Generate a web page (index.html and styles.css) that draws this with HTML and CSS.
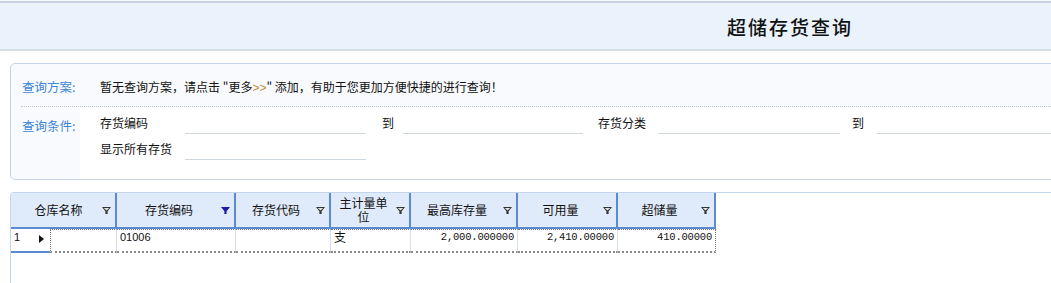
FILE: index.html
```html
<!DOCTYPE html>
<html lang="zh-CN">
<head>
    <meta charset="UTF-8">
    <title>超储存货查询</title>
    <link rel="stylesheet" href="styles.css">
</head>
<body>
    <svg width="0" height="0" class="defs">
        <symbol id="flt" viewBox="0 0 9 7">
            <path d="M0 0h9L5.6 4.2V7H3.4V4.2z" fill="#333"/>
            <path d="M1.8 1h5.4L4.5 3.6z" fill="#e4e4e4"/>
        </symbol>
        <symbol id="flt-on" viewBox="0 0 9 7">
            <path d="M0 0h9L5.6 4.2V7H3.4V4.2z" fill="#1c1ca8"/>
        </symbol>
    </svg>

    <div class="topline"></div>
    <div class="header">
        <h1 class="title">超储存货查询</h1>
    </div>

    <div class="query">
        <div class="q-row plan">
            <div class="q-label">查询方案:</div>
            <div class="q-msg">暂无查询方案，请点击 "更多<span class="more">&gt;&gt;</span>" 添加，有助于您更加方便快捷的进行查询！</div>
        </div>
        <div class="q-row cond">
            <div class="q-label">查询条件:</div>
            <div class="fields">
                <span class="f-label">存货编码</span>
                <span class="f-input"></span>
                <span class="f-to">到</span>
                <span class="f-input"></span>
                <span class="f-label f-cls">存货分类</span>
                <span class="f-input"></span>
                <span class="f-to f-to2">到</span>
                <span class="f-input"></span>

                <span class="f-label">显示所有存货</span>
                <span class="f-input"></span>
            </div>
        </div>
    </div>

    <div class="grid-wrap">
        <div class="grid">
            <div class="th span2"><span class="th-text">仓库名称</span><svg class="flt"><use href="#flt"/></svg></div>
            <div class="th"><span class="th-text">存货编码</span><svg class="flt"><use href="#flt-on"/></svg></div>
            <div class="th"><span class="th-text">存货代码</span><svg class="flt"><use href="#flt"/></svg></div>
            <div class="th"><span class="th-text two"><span class="ln">主计量单</span><span class="ln">位</span></span><svg class="flt"><use href="#flt"/></svg></div>
            <div class="th"><span class="th-text">最高库存量</span><svg class="flt"><use href="#flt"/></svg></div>
            <div class="th"><span class="th-text">可用量</span><svg class="flt"><use href="#flt"/></svg></div>
            <div class="th"><span class="th-text">超储量</span><svg class="flt"><use href="#flt"/></svg></div>

            <div class="rh"><span>1</span><span class="arrow"></span></div>
            <div class="td first"></div>
            <div class="td">01006</div>
            <div class="td"></div>
            <div class="td cjk">支</div>
            <div class="td num">2,000.000000</div>
            <div class="td num">2,410.00000</div>
            <div class="td num last">410.00000</div>
        </div>
    </div>
</body>
</html>
```

FILE: styles.css
```css
html, body {
    margin: 0;
    padding: 0;
}
body {
    width: 1051px;
    height: 283px;
    overflow: hidden;
    background: #fff;
    font-family: "Noto Sans CJK SC", "Liberation Sans", sans-serif;
    font-size: 12px;
    color: #111;
}
.defs {
    position: absolute;
}

.topline {
    height: 1px;
    background: #f3f5f8;
}
.header {
    height: 46px;
    background: #eaf2fc;
    border-top: 2px solid #c6d3e3;
    border-bottom: 2px solid #d5dce4;
    display: flex;
    align-items: center;
}
.title {
    margin: 0 0 0 727px;
    font-size: 19px;
    font-weight: 500;
    letter-spacing: 2px;
    color: #111;
}

.query {
    margin: 12px 0 0 10px;
    width: 1100px;
    height: 115px;
    border: 1px solid #c4d5ea;
    border-radius: 5px;
    background: #f8fafd;
    overflow: hidden;
}
.q-row {
    display: flex;
}
.q-label {
    width: 58px;
    padding-left: 11px;
    color: #3d86d8;
    font-size: 12.5px;
}
.plan {
    height: 40px;
    align-items: center;
    padding-top: 2px;
    border-bottom: 1px dotted #bfc6cf;
    margin-left: 10px;
}
.plan .q-label {
    padding-left: 1px;
    width: 68px;
}
.q-msg {
    padding-left: 10px;
}
.more {
    color: #c68a2e;
    font-family: "Liberation Sans", sans-serif;
}
.cond {
    height: 73px;
}
.cond .q-label {
    padding-top: 9px;
}
.fields {
    flex: 1;
    background: #fff;
    padding-top: 3px;
    display: grid;
    grid-template-columns: 105px 181px 37px 180px 75px 182px 37px 180px;
    grid-auto-rows: 26px;
}
.f-label, .f-to {
    line-height: 26px;
    white-space: nowrap;
}
.f-label {
    padding-left: 20px;
}
.f-cls {
    padding-left: 15px;
}
.f-to {
    padding-left: 16px;
}
.f-to2 {
    padding-left: 12px;
}
.f-input {
    height: 23px;
    border-bottom: 1px solid #cfd8e2;
}

.grid-wrap {
    margin: 12px 0 0 10px;
    height: 100px;
    border-top: 1px solid #c3d5ee;
    border-left: 1px solid #c3d5ee;
    border-top-left-radius: 4px;
}
.grid {
    display: grid;
    grid-template-columns: 39px 67px 119px 95px 80px 107px 100px 98px;
    grid-template-rows: 36px 24px;
    width: 705px;
}
.th {
    display: flex;
    align-items: center;
    background: #dfeafa;
    border-right: 2px solid #5a8bd0;
    border-bottom: 2px solid #5a8bd0;
    box-sizing: border-box;
    padding-right: 4px;
}
.span2 {
    grid-column: span 2;
    padding-left: 4px;
}
.th-text {
    flex: 1;
    text-align: center;
    line-height: 14px;
    white-space: nowrap;
}
.th-text.two {
    display: flex;
    flex-direction: column;
    gap: 2px;
    align-items: center;
}
.ln {
    display: block;
    height: 12px;
    line-height: 12px;
}
.flt {
    width: 9px;
    height: 7px;
    flex: none;
}

.rh {
    display: flex;
    align-items: flex-start;
    justify-content: space-between;
    padding: 1px 6px 0 3px;
    border-bottom: 2px solid #5a8bd0;
    font-family: "Liberation Sans", sans-serif;
    font-size: 11px;
    line-height: 14px;
}
.arrow {
    margin-top: 5px;
    width: 0;
    height: 0;
    border-top: 4px solid transparent;
    border-bottom: 4px solid transparent;
    border-left: 5px solid #111;
}
.td {
    border-top: 1px dotted #7a7a7a;
    border-bottom: 2px dotted #8a8a8a;
    border-right: 1px solid #d6e1ef;
    padding: 0 3px;
    font-family: "Liberation Sans", sans-serif;
    font-size: 11px;
    line-height: 14px;
    box-sizing: border-box;
    white-space: nowrap;
}
.td.first {
    border-left: 1px dotted #7a7a7a;
}
.td.last {
    border-right: 1px dotted #7a7a7a;
}
.td.cjk {
    font-family: "Noto Sans CJK SC", sans-serif;
    font-size: 12px;
}
.td.num {
    text-align: right;
    font-family: "Liberation Mono", monospace;
    font-size: 10.5px;
    letter-spacing: -0.2px;
}
```
